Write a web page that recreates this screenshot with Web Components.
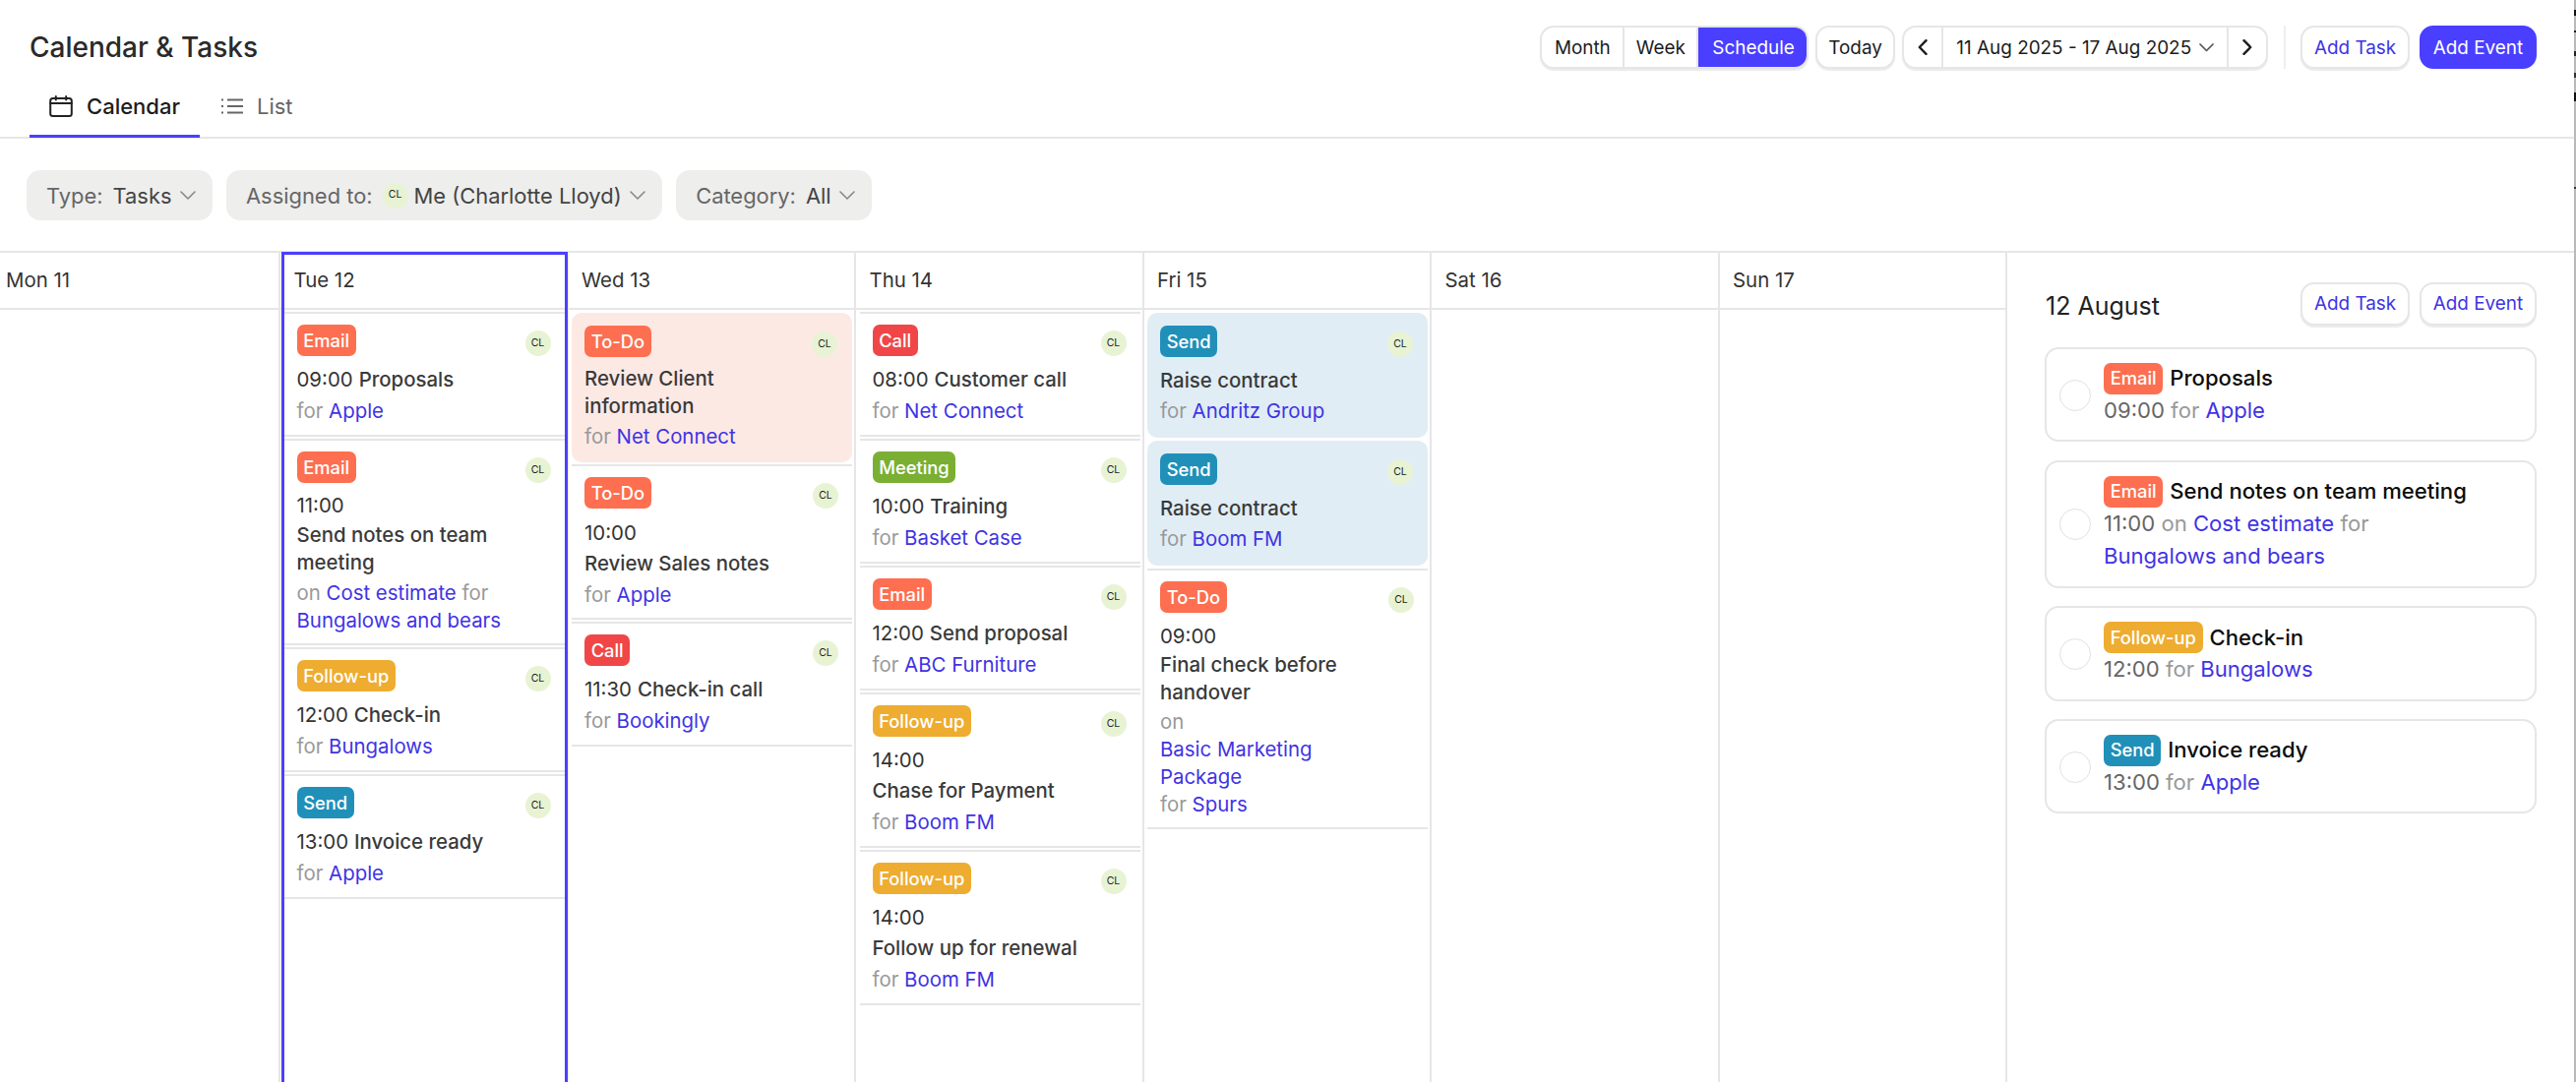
<!DOCTYPE html>
<html lang="en">
<head>
<meta charset="utf-8">
<title>Calendar & Tasks</title>
<style>
  html, body { margin: 0; height: 100%; background: #fff; }
  body { display: flex; height: 1100px; overflow: hidden; font-family: Inter, "Liberation Sans", sans-serif; }
</style>
</head>
<body>
<cal-page>
  <page-header slot="header" heading="Calendar &amp; Tasks">
    <seg-group slot="actions">
      <seg-btn style="padding:0 12.500px">Month</seg-btn>
      <seg-btn style="padding:0 11.500px">Week</seg-btn>
      <seg-btn active last style="padding:0 14px">Schedule</seg-btn>
    </seg-group>
    <seg-group slot="actions"><seg-btn last style="padding:0 11.500px">Today</seg-btn></seg-group>
    <seg-group slot="actions">
      <seg-btn icon><svg width="10" height="16" viewBox="0 0 10 16" fill="none" stroke="#1c1c1c" stroke-width="2.4" stroke-linecap="round" stroke-linejoin="round"><path d="M8.5 1.2 1.8 8l6.7 6.8"/></svg></seg-btn>
      <seg-btn>11 Aug 2025 - 17 Aug 2025<svg style="margin-left:8px" width="15" height="9" viewBox="0 0 15 9" fill="none" stroke="#555" stroke-width="1.7" stroke-linecap="round" stroke-linejoin="round"><path d="M1 1l6.500 6.500L14 1"/></svg></seg-btn>
      <seg-btn icon last><svg width="10" height="16" viewBox="0 0 10 16" fill="none" stroke="#1c1c1c" stroke-width="2.4" stroke-linecap="round" stroke-linejoin="round"><path d="M1.500 1.200 8.200 8l-6.700 6.800"/></svg></seg-btn>
    </seg-group>
    <v-sep slot="actions"></v-sep>
    <action-btn slot="actions">Add Task</action-btn>
    <action-btn slot="actions" primary>Add Event</action-btn>
    <tab-item slot="tabs" active>
      <svg slot="icon" width="24" height="22" viewBox="0 0 24 22" fill="none" stroke="#222" stroke-width="2" stroke-linecap="round"><rect x="1.200" y="3" width="21.600" height="18" rx="2.500"/><path d="M1.200 8h21.600M6.800 1v3.500M17.200 1v3.500"/></svg>
      Calendar
    </tab-item>
    <tab-item slot="tabs">
      <svg slot="icon" width="22" height="16" viewBox="0 0 22 16" fill="none" stroke="#666" stroke-width="2"><path d="M6 1.500h16M6 8h16M6 14.500h16M0 1.500h2M0 8h2M0 14.500h2" /></svg>
      List
    </tab-item>
  </page-header>

  <filter-bar slot="filters">
    <filter-chip label="Type:">Tasks</filter-chip>
    <filter-chip label="Assigned to:"><user-badge slot="lead"></user-badge>Me (Charlotte Lloyd)</filter-chip>
    <filter-chip label="Category:">All</filter-chip>
  </filter-bar>

  <week-grid slot="calendar">
    <day-column first day="Mon 11"></day-column>

    <day-column selected day="Tue 12">
      <task-card tag="Email" tone="email" time="09:00" heading="Proposals">for <task-link>Apple</task-link></task-card>
      <task-card tag="Email" tone="email" time="11:00" heading="Send notes on team meeting" style="--head-gap:9px;--row-gap:2px;--meta-gap:3px;--pad-b:9px">on <task-link>Cost estimate</task-link> for <task-link>Bungalows and bears</task-link></task-card>
      <task-card tag="Follow-up" tone="follow" time="12:00" heading="Check-in">for <task-link>Bungalows</task-link></task-card>
      <task-card tag="Send" tone="send" time="13:00" heading="Invoice ready">for <task-link>Apple</task-link></task-card>
    </day-column>

    <day-column day="Wed 13">
      <task-card fill="pink" tag="To-Do" tone="email" heading="Review Client information" style="--head-gap:8px;--meta-gap:3px;--pad-b:12px">for <task-link>Net Connect</task-link></task-card>
      <task-card tag="To-Do" tone="email" time="10:00" heading="Review Sales notes" style="--head-gap:11px;--meta-gap:4px;--pad-b:9px">for <task-link>Apple</task-link></task-card>
      <task-card tag="Call" tone="call" time="11:30" heading="Check-in call">for <task-link>Bookingly</task-link></task-card>
    </day-column>

    <day-column day="Thu 14">
      <task-card tag="Call" tone="call" time="08:00" heading="Customer call">for <task-link>Net Connect</task-link></task-card>
      <task-card tag="Meeting" tone="meeting" time="10:00" heading="Training">for <task-link>Basket Case</task-link></task-card>
      <task-card tag="Email" tone="email" time="12:00" heading="Send proposal">for <task-link>ABC Furniture</task-link></task-card>
      <task-card tag="Follow-up" tone="follow" time="14:00" heading="Chase for Payment">for <task-link>Boom FM</task-link></task-card>
      <task-card tag="Follow-up" tone="follow" time="14:00" heading="Follow up for renewal">for <task-link>Boom FM</task-link></task-card>
    </day-column>

    <day-column day="Fri 15">
      <task-card fill="blue" tag="Send" tone="send" heading="Raise contract">for <task-link>Andritz Group</task-link></task-card>
      <task-card fill="blue" tag="Send" tone="send" heading="Raise contract">for <task-link>Boom FM</task-link></task-card>
      <task-card tag="To-Do" tone="email" time="09:00" heading="Final check before handover" style="--row-gap:1px;--meta-gap:2px;--pad-b:9px;margin-top:1px">on <task-link>Basic Marketing Package</task-link> for <task-link>Spurs</task-link></task-card>
    </day-column>

    <day-column day="Sat 16"></day-column>
    <day-column day="Sun 17"></day-column>

    <side-panel heading="12 August">
      <action-btn slot="actions">Add Task</action-btn>
      <action-btn slot="actions">Add Event</action-btn>
      <side-task tag="Email" tone="email" heading="Proposals" time="09:00">for <task-link>Apple</task-link></side-task>
      <side-task tag="Email" tone="email" heading="Send notes on team meeting" time="11:00">on <task-link>Cost estimate</task-link> for <task-link>Bungalows and bears</task-link></side-task>
      <side-task tag="Follow-up" tone="follow" heading="Check-in" time="12:00">for <task-link>Bungalows</task-link></side-task>
      <side-task tag="Send" tone="send" heading="Invoice ready" time="13:00">for <task-link>Apple</task-link></side-task>
    </side-panel>
  </week-grid>
</cal-page>
<edge-strip></edge-strip>

<script>
  const LINE = '#e6e6e6';
  const PRIMARY = '#4a3fff';
  const LINK = '#3f33e4';

  class CalPage extends HTMLElement {
    constructor() {
      super();
      this.attachShadow({mode: 'open'});
      this.shadowRoot.innerHTML = `
        <style>
          :host { display: flex; flex-direction: column; width: 2616px; height: 1100px; color: #222; }
        </style>
        <slot name="header"></slot>
        <slot name="filters"></slot>
        <slot name="calendar"></slot>
      `;
    }
  }

  class PageHeader extends HTMLElement {
    constructor() {
      super();
      this.attachShadow({mode: 'open'});
      this.shadowRoot.innerHTML = `
        <style>
          :host { display: block; border-bottom: 2px solid ${LINE}; height: 141px; box-sizing: border-box; }
          .top { display: flex; align-items: center; justify-content: space-between; padding: 26px 38px 0 30px; height: 44px; }
          h1 { margin: 0; font-size: 28px; font-weight: 500; color: #2a2a2a; }
          .actions { display: flex; align-items: center; gap: 7px; }
          .tabs { display: flex; gap: 2px; padding-left: 30px; margin-top: 14px; }
        </style>
        <div class="top">
          <h1>${this.getAttribute('heading')}</h1>
          <div class="actions"><slot name="actions"></slot></div>
        </div>
        <div class="tabs"><slot name="tabs"></slot></div>
      `;
    }
  }

  class SegGroup extends HTMLElement {
    constructor() {
      super();
      this.attachShadow({mode: 'open'});
      this.shadowRoot.innerHTML = `
        <style>
          :host { display: inline-flex; height: 44px; box-sizing: border-box; border: 2px solid ${LINE}; border-radius: 14px;
                  box-shadow: 0 2px 1px rgba(0,0,0,.08); overflow: hidden; background: #fff; }
        </style>
        <slot></slot>
      `;
    }
  }

  class SegBtn extends HTMLElement {
    constructor() {
      super();
      this.attachShadow({mode: 'open'});
      this.shadowRoot.innerHTML = `
        <style>
          :host { display: flex; align-items: center; padding: 0 13px; font-size: 18.900px; color: #1c1c1c; white-space: nowrap;
                  border-right: 2px solid ${LINE}; margin: -2px 0; }
          :host([last]) { border-right: 0; }
          :host([active]) { background: ${PRIMARY}; color: #fff; margin-right: -2px; }
          :host([icon]) { padding: 0 14px; }
        </style>
        <slot></slot>
      `;
    }
  }

  class VSep extends HTMLElement {
    constructor() {
      super();
      this.attachShadow({mode: 'open'});
      this.shadowRoot.innerHTML = `
        <style>
          :host { display: block; width: 2px; height: 44px; background: #efefef; margin: 0 5px 0 9px; }
        </style>
      `;
    }
  }

  class ActionBtn extends HTMLElement {
    constructor() {
      super();
      this.attachShadow({mode: 'open'});
      this.shadowRoot.innerHTML = `
        <style>
          :host { display: inline-flex; align-items: center; height: 44px; box-sizing: border-box; padding: 0 11.800px; font-size: 18.900px;
                  color: ${LINK}; border: 2px solid ${LINE}; border-radius: 14px; box-shadow: 0 2px 1px rgba(0,0,0,.08);
                  background: #fff; white-space: nowrap; margin-left: 3px; }
          :host([primary]) { background: ${PRIMARY}; border-color: ${PRIMARY}; color: #fff; box-shadow: none; }
        </style>
        <slot></slot>
      `;
    }
  }

  class TabItem extends HTMLElement {
    constructor() {
      super();
      this.attachShadow({mode: 'open'});
      this.shadowRoot.innerHTML = `
        <style>
          :host { display: flex; align-items: center; gap: 14px; height: 56px; padding: 0 20px 5px; box-sizing: border-box; font-size: 22px;
                  color: #666; border-bottom: 3px solid transparent; }
          :host([active]) { color: #1c1c1c; font-weight: 500; border-bottom-color: ${PRIMARY}; }
          ::slotted(svg) { display: block; }
        </style>
        <slot name="icon"></slot><slot></slot>
      `;
    }
  }

  class FilterBar extends HTMLElement {
    constructor() {
      super();
      this.attachShadow({mode: 'open'});
      this.shadowRoot.innerHTML = `
        <style>
          :host { display: flex; gap: 14px; padding: 32px 0 32px 27px; }
        </style>
        <slot></slot>
      `;
    }
  }

  class FilterChip extends HTMLElement {
    constructor() {
      super();
      this.attachShadow({mode: 'open'});
      this.shadowRoot.innerHTML = `
        <style>
          :host { display: flex; align-items: center; height: 51px; padding: 0 17px 0 20px; background: #eeeeed; border-radius: 14px;
                  font-size: 21.900px; color: #444; white-space: nowrap; }
          .label { color: #666; margin-right: 10px; }
          .val { display: flex; align-items: center; }
          svg { margin-left: 8.500px; }
          ::slotted(user-badge) { margin-right: 6px; }
        </style>
        <span class="label">${this.getAttribute('label')}</span>
        <slot name="lead"></slot>
        <span class="val"><slot></slot></span>
        <svg width="16" height="9" viewBox="0 0 16 9" fill="none" stroke="#888" stroke-width="1.600" stroke-linecap="round" stroke-linejoin="round"><path d="M1 1l7 7 7-7"/></svg>
      `;
    }
  }

  class UserBadge extends HTMLElement {
    constructor() {
      super();
      this.attachShadow({mode: 'open'});
      this.shadowRoot.innerHTML = `
        <style>
          :host { display: inline-flex; align-items: center; justify-content: center; flex: none; width: 26px; height: 26px; border-radius: 50%;
                  background: #e8f3d4; color: #222; font-size: 10.500px; font-weight: 400; line-height: 1; }
        </style>
        CL
      `;
    }
  }

  class WeekGrid extends HTMLElement {
    constructor() {
      super();
      this.attachShadow({mode: 'open'});
      this.shadowRoot.innerHTML = `
        <style>
          :host { display: grid; grid-template-columns: 285px repeat(6, 292.500px) 1fr; flex: 1; min-height: 0;
                  border-top: 2px solid ${LINE}; margin-top: -1px; }
        </style>
        <slot></slot>
      `;
    }
  }

  class DayColumn extends HTMLElement {
    constructor() {
      super();
      this.attachShadow({mode: 'open'});
      this.shadowRoot.innerHTML = `
        <style>
          :host { display: flex; flex-direction: column; position: relative; border-right: 2px solid ${LINE}; min-width: 0; }
          .head { height: 58px; box-sizing: border-box; padding: 15px 0 0 13.500px; line-height: 26px; font-size: 20.400px; color: #333;
                  border-bottom: 2px solid ${LINE}; }
          :host([first]) .head { padding-left: 6px; }
          .body { display: flex; flex-direction: column; padding: 2px 2px 0 3.500px; }
          :host([selected])::after { content: ""; position: absolute; top: -1px; bottom: 0; left: 1px; right: -1px;
                                     border: solid ${PRIMARY}; border-width: 3px 3.500px 0; pointer-events: none; }
        </style>
        <div class="head">${this.getAttribute('day')}</div>
        <div class="body"><slot></slot></div>
      `;
    }
  }

  const TONES = { email: '#fd6f50', call: '#f04647', meeting: '#7aaf33', follow: '#eeac30', send: '#2090b9' };

  class TaskTag extends HTMLElement {
    constructor() {
      super();
      this.attachShadow({mode: 'open'});
      this.shadowRoot.innerHTML = `
        <style>
          :host { display: inline-flex; align-items: center; flex: none; height: 32px; padding: 0 6.670px; border-radius: 7px;
                  font-size: 18.330px; font-weight: 500; color: #fff; background: ${TONES[this.getAttribute('tone')]}; white-space: nowrap; }
        </style>
        <slot></slot>
      `;
    }
  }

  class TaskCard extends HTMLElement {
    constructor() {
      super();
      this.attachShadow({mode: 'open'});
      const time = this.getAttribute('time');
      this.shadowRoot.innerHTML = `
        <style>
          :host { display: block; margin-bottom: 2px; padding: 11px 14px var(--pad-b, 10px) 13px; border: solid ${LINE}; border-width: 2px 0;
                  font-size: 20.400px; line-height: 28px; }
          :host([fill]) { border: 0; border-radius: 10px; margin: 1px 0 2px; padding: 13px 15px var(--pad-b, 13px) 13px; }
          :host([fill="pink"]) { background: #fde9e4; }
          :host([fill="blue"]) { background: #e0edf5; }
          .top { display: flex; align-items: flex-end; justify-content: space-between; }
          .head { display: flex; flex-wrap: wrap; column-gap: 6px; row-gap: var(--row-gap, 3px); max-width: 240px;
                  margin-top: var(--head-gap, 10px); font-weight: 500; color: #3a3a3a; }
          .time { font-weight: 400; color: #333; }
          .meta { max-width: 240px; margin-top: var(--meta-gap, 4px); color: #999; }
          :host([fill]) .meta { margin-top: var(--meta-gap, 3px); }
        </style>
        <div class="top">
          <task-tag tone="${this.getAttribute('tone')}">${this.getAttribute('tag')}</task-tag>
          <user-badge></user-badge>
        </div>
        <div class="head">${time ? `<span class="time">${time}</span>` : ''}<span>${this.getAttribute('heading')}</span></div>
        <div class="meta"><slot></slot></div>
      `;
    }
  }

  class TaskLink extends HTMLElement {
    constructor() {
      super();
      this.attachShadow({mode: 'open'});
      this.shadowRoot.innerHTML = `
        <style>
          :host { display: inline-block; color: ${LINK}; vertical-align: top; }
        </style>
        <slot></slot>
      `;
    }
  }

  class SidePanel extends HTMLElement {
    constructor() {
      super();
      this.attachShadow({mode: 'open'});
      this.shadowRoot.innerHTML = `
        <style>
          :host { display: block; padding: 29px 38px 0 38px; }
          .top { display: flex; align-items: center; justify-content: space-between; height: 45px; margin-bottom: 22px; }
          h2 { margin: 5px 0 0 1px; font-size: 25px; font-weight: 400; color: #222; }
          .actions { display: flex; gap: 7px; }
          .list { display: flex; flex-direction: column; gap: 18.600px; }
        </style>
        <div class="top">
          <h2>${this.getAttribute('heading')}</h2>
          <div class="actions"><slot name="actions"></slot></div>
        </div>
        <div class="list"><slot></slot></div>
      `;
    }
  }

  class SideTask extends HTMLElement {
    constructor() {
      super();
      this.attachShadow({mode: 'open'});
      this.shadowRoot.innerHTML = `
        <style>
          :host { display: flex; align-items: center; gap: 13px; padding: 14px 13px 13px; border: 2px solid ${LINE}; border-radius: 14px;
                  font-size: 22.100px; line-height: 33.330px; }
          .check { flex: none; width: 32px; height: 32px; box-sizing: border-box; border: 1.500px solid #e2e2e2; border-radius: 50%; }
          .info { min-width: 0; flex: 1; }
          .title { display: flex; align-items: center; gap: 7px; height: 32px; font-weight: 500; color: #0c0c0c; }
          .meta { color: #999; }
          .time { color: #666; }
        </style>
        <div class="check"></div>
        <div class="info">
          <div class="title"><task-tag tone="${this.getAttribute('tone')}">${this.getAttribute('tag')}</task-tag><span>${this.getAttribute('heading')}</span></div>
          <div class="meta"><span class="time">${this.getAttribute('time')}</span> <slot></slot></div>
        </div>
      `;
    }
  }

  class EdgeStrip extends HTMLElement {
    constructor() {
      super();
      this.attachShadow({mode: 'open'});
      // thin window edge that shows at the right of the capture
      this.shadowRoot.innerHTML = `
        <style>
          :host { display: block; flex: none; width: 2px; height: 1100px; background-color: #b9b9b9;
                  background-image: linear-gradient(#111,#111), linear-gradient(#222,#222), linear-gradient(#222,#222), linear-gradient(#333,#333), linear-gradient(#111,#111), linear-gradient(#333,#333);
                  background-repeat: no-repeat; background-size: 2px 6px, 2px 2px, 2px 5px, 2px 5px, 2px 9px, 2px 2px;
                  background-position: 0 10px, 0 31px, 0 52px, 0 74px, 0 94px, 0 190px; }
        </style>
      `;
    }
  }

  customElements.define('user-badge', UserBadge);
  customElements.define('task-tag', TaskTag);
  customElements.define('task-link', TaskLink);
  customElements.define('task-card', TaskCard);
  customElements.define('side-task', SideTask);
  customElements.define('side-panel', SidePanel);
  customElements.define('day-column', DayColumn);
  customElements.define('week-grid', WeekGrid);
  customElements.define('filter-chip', FilterChip);
  customElements.define('filter-bar', FilterBar);
  customElements.define('tab-item', TabItem);
  customElements.define('action-btn', ActionBtn);
  customElements.define('v-sep', VSep);
  customElements.define('seg-btn', SegBtn);
  customElements.define('seg-group', SegGroup);
  customElements.define('page-header', PageHeader);
  customElements.define('edge-strip', EdgeStrip);
  customElements.define('cal-page', CalPage);
</script>
</body>
</html>
